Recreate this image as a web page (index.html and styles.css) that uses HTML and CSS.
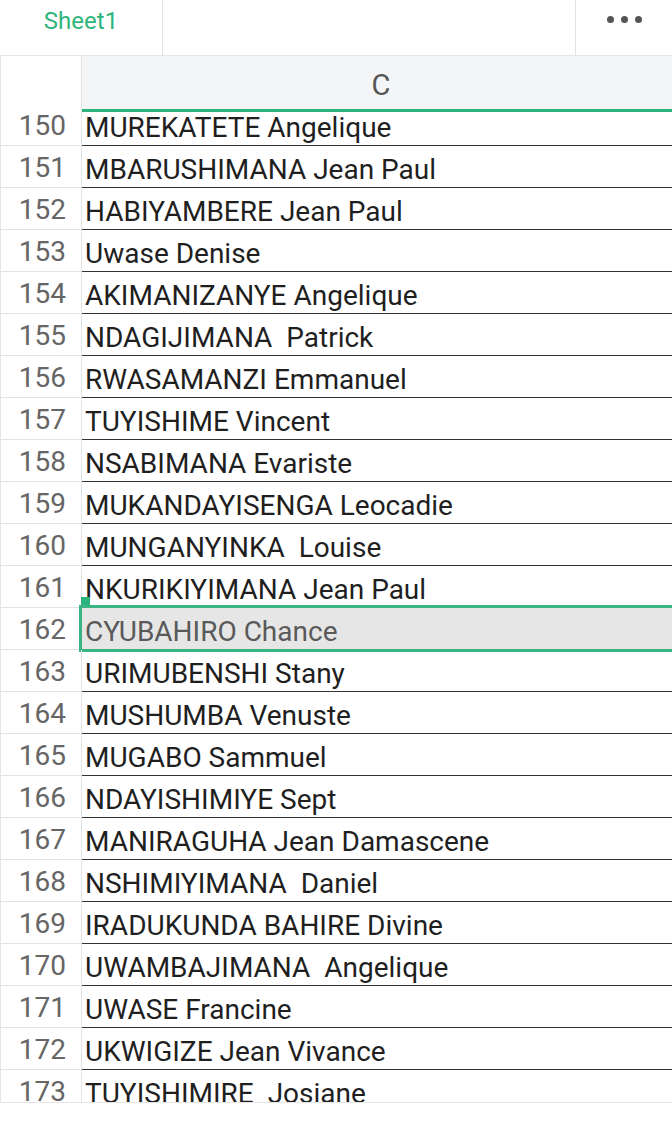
FILE: index.html
```html
<!DOCTYPE html>
<html>
<head>
<meta charset="utf-8">
<link rel="stylesheet" href="styles.css">
</head>
<body>
<div class="topbar">
  <div class="tab">Sheet1</div>
  <div class="tab-space"></div>
  <div class="more"><span class="dot"></span><span class="dot"></span><span class="dot"></span></div>
</div>
<div class="header">
  <div class="corner"></div>
  <div class="colhead">C</div>
</div>
<div class="body">
  <div class="rows">
    <div class="row first"><div class="num">150</div><div class="name">MUREKATETE Angelique</div></div>
    <div class="row"><div class="num">151</div><div class="name">MBARUSHIMANA Jean Paul</div></div>
    <div class="row"><div class="num">152</div><div class="name">HABIYAMBERE Jean Paul</div></div>
    <div class="row"><div class="num">153</div><div class="name">Uwase Denise</div></div>
    <div class="row"><div class="num">154</div><div class="name">AKIMANIZANYE Angelique</div></div>
    <div class="row"><div class="num">155</div><div class="name">NDAGIJIMANA&nbsp; Patrick</div></div>
    <div class="row"><div class="num">156</div><div class="name">RWASAMANZI Emmanuel</div></div>
    <div class="row"><div class="num">157</div><div class="name">TUYISHIME Vincent</div></div>
    <div class="row"><div class="num">158</div><div class="name">NSABIMANA Evariste</div></div>
    <div class="row"><div class="num">159</div><div class="name">MUKANDAYISENGA Leocadie</div></div>
    <div class="row"><div class="num">160</div><div class="name">MUNGANYINKA&nbsp; Louise</div></div>
    <div class="row"><div class="num">161</div><div class="name">NKURIKIYIMANA Jean Paul</div></div>
    <div class="row selected"><div class="num">162</div><div class="name">CYUBAHIRO Chance</div><span class="handle"></span></div>
    <div class="row"><div class="num">163</div><div class="name">URIMUBENSHI Stany</div></div>
    <div class="row"><div class="num">164</div><div class="name">MUSHUMBA Venuste</div></div>
    <div class="row"><div class="num">165</div><div class="name">MUGABO Sammuel</div></div>
    <div class="row"><div class="num">166</div><div class="name">NDAYISHIMIYE Sept</div></div>
    <div class="row"><div class="num">167</div><div class="name">MANIRAGUHA Jean Damascene</div></div>
    <div class="row"><div class="num">168</div><div class="name">NSHIMIYIMANA&nbsp; Daniel</div></div>
    <div class="row"><div class="num">169</div><div class="name">IRADUKUNDA BAHIRE Divine</div></div>
    <div class="row"><div class="num">170</div><div class="name">UWAMBAJIMANA&nbsp; Angelique</div></div>
    <div class="row"><div class="num">171</div><div class="name">UWASE Francine</div></div>
    <div class="row"><div class="num">172</div><div class="name">UKWIGIZE Jean Vivance</div></div>
    <div class="row"><div class="num">173</div><div class="name">TUYISHIMIRE&nbsp; Josiane</div></div>
  </div>
</div>
</body>
</html>
```
FILE: styles.css
```css
html, body {
  margin: 0;
  padding: 0;
  background: #ffffff;
}
body {
  width: 672px;
  font-family: Roboto, "Liberation Sans", sans-serif;
}
.topbar {
  display: flex;
  height: 56px;
  border-bottom: 1px solid #e6e6e6;
  box-sizing: border-box;
}
.tab {
  width: 163px;
  border-right: 1px solid #e3e3e3;
  box-sizing: border-box;
  color: #2fb57b;
  font-size: 24px;
  text-align: center;
  line-height: 42px;
  height: 55px;
}
.tab-space {
  flex: 1;
  border-right: 1px solid #e3e3e3;
  height: 55px;
}
.more {
  width: 96px;
  display: flex;
  justify-content: center;
  align-items: flex-start;
  gap: 7px;
  padding-top: 16px;
  box-sizing: border-box;
}
.dot {
  width: 7px;
  height: 7px;
  border-radius: 50%;
  background: #555555;
}
.header {
  display: flex;
  height: 56px;
}
.corner {
  width: 82px;
  border-left: 1px solid #e6e6e6;
  border-right: 1px solid #e3e3e3;
  box-sizing: border-box;
  background: #ffffff;
}
.colhead {
  flex: 1;
  background: #f4f5f7;
  border-bottom: 3px solid #2db47d;
  color: #555555;
  font-size: 29px;
  text-align: center;
  line-height: 58px;
  padding-left: 8px;
  box-sizing: border-box;
}
.body {
  height: 990px;
  overflow: hidden;
  border-bottom: 1px solid #e6e6e6;
}
.row {
  display: flex;
  height: 42px;
  position: relative;
}
.row.first {
  margin-top: -8px;
}
.num {
  width: 82px;
  box-sizing: border-box;
  border-left: 1px solid #e6e6e6;
  border-right: 1px solid #e3e3e3;
  border-bottom: 1px solid #e3e3e3;
  color: #666666;
  font-size: 28px;
  line-height: 28px;
  text-align: right;
  padding-right: 15px;
  padding-top: 8px;
}
.name {
  flex: 1;
  box-sizing: border-box;
  border-bottom: 1px solid #333333;
  color: #1f1f1f;
  font-size: 28px;
  line-height: 28px;
  padding-left: 3px;
  padding-top: 10px;
  white-space: nowrap;
  overflow: hidden;
}
.row.selected .name {
  background: #e6e6e6;
  color: #5a5a5a;
  border-bottom-color: #e6e6e6;
}
.row.selected::after {
  content: "";
  position: absolute;
  left: 79px;
  right: -4px;
  top: -3px;
  bottom: -2px;
  border: 3px solid #3ab483;
  pointer-events: none;
}
.handle {
  position: absolute;
  left: 81px;
  top: -11px;
  width: 9px;
  height: 10px;
  background: #2db47d;
}
```
